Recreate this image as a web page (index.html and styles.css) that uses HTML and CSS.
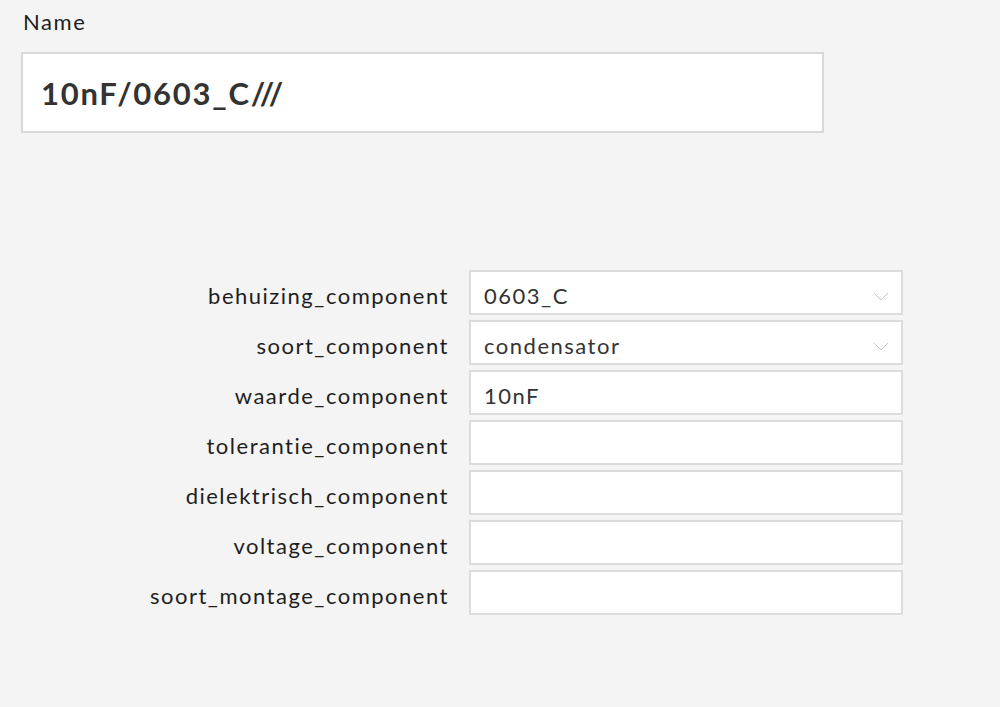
FILE: index.html
```html
<!DOCTYPE html>
<html lang="nl">
<head>
<meta charset="utf-8">
<title>Component</title>
<link rel="stylesheet" href="styles.css">
</head>
<body>
<div class="page">
  <div class="name-label">Name</div>
  <div class="name-box">10nF/0603_C///</div>
  <div class="form">
    <div class="label">behuizing_component</div>
    <div class="field select"><span>0603_C</span><svg class="chev" width="16" height="9" viewBox="0 0 16 9"><path d="M1 1 L8 8 L15 1" fill="none" stroke="#c8c8c8" stroke-width="1"/></svg></div>
    <div class="label">soort_component</div>
    <div class="field select"><span>condensator</span><svg class="chev" width="16" height="9" viewBox="0 0 16 9"><path d="M1 1 L8 8 L15 1" fill="none" stroke="#c8c8c8" stroke-width="1"/></svg></div>
    <div class="label">waarde_component</div>
    <div class="field"><span>10nF</span></div>
    <div class="label">tolerantie_component</div>
    <div class="field"></div>
    <div class="label">dielektrisch_component</div>
    <div class="field"></div>
    <div class="label">voltage_component</div>
    <div class="field"></div>
    <div class="label">soort_montage_component</div>
    <div class="field"></div>
  </div>
</div>
</body>
</html>
```
FILE: styles.css
```css
html, body {
  margin: 0;
  padding: 0;
  background: #f4f4f4;
}
.page {
  font-family: Lato, "Noto Sans", sans-serif;
  color: #1e1e1e;
  padding-top: 8px;
}
.name-label {
  font-size: 22px;
  letter-spacing: 1.6px;
  line-height: 28px;
  padding-left: 23px;
}
.name-box {
  margin-top: 16px;
  margin-left: 21px;
  height: 77px;
  border: 2px solid #d9d9d9;
  background: #fff;
  box-sizing: content-box;
  font-size: 31px;
  font-weight: 700;
  letter-spacing: 1.75px;
  color: #333;
  display: flex;
  align-items: center;
  padding-left: 18px;
  width: 781px;
}
.form {
  margin-top: 137px;
  display: grid;
  grid-template-columns: 448px 434px;
  grid-auto-rows: 45px;
  column-gap: 21px;
  row-gap: 5px;
}
.label {
  font-size: 22px;
  letter-spacing: 1.5px;
  display: flex;
  align-items: center;
  justify-content: flex-end;
  padding-top: 5px;
  margin-right: -1px;
  box-sizing: border-box;
}
.field {
  background: #fff;
  border: 2px solid #dcdcdc;
  box-sizing: border-box;
  display: flex;
  align-items: center;
  padding: 6px 12px 0 13px;
  font-size: 22px;
  letter-spacing: 1.5px;
  color: #333;
}
.field span {
  flex: 1;
}
.chev {
  margin-top: 1px;
}
```
